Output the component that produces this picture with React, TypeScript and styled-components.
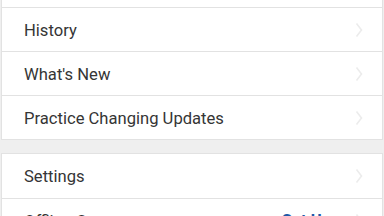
import styled, { createGlobalStyle } from 'styled-components'

const GlobalStyle = createGlobalStyle`
  html, body {
    margin: 0;
    padding: 0;
    background: #efefef;
    font-family: Roboto, "Liberation Sans", sans-serif;
    overflow: hidden;
  }
`

const Page = styled.div`
  width: 384px;
  height: 216px;
  overflow: hidden;
  background: #efefef;
`

const Scroller = styled.div`
  margin-top: -37px;
  display: flex;
  flex-direction: column;
  gap: 13px;
`

const Group = styled.ul`
  list-style: none;
  margin: 0 1px;
  padding: 0;
  background: #fff;
  border: 1px solid #e2e2e2;
`

const Row = styled.li<{ $tall?: boolean }>`
  display: flex;
  align-items: center;
  height: ${p => (p.$tall ? 44 : 43)}px;
  padding: 0 19px 0 22px;
  border-top: 1px solid #e2e2e2;
  &:first-child {
    border-top: none;
  }
`

const Label = styled.span`
  flex: 1;
  font-size: 16.6px;
  color: #353535;
  padding-top: 1px;
`

const Action = styled.span`
  font-size: 16.6px;
  font-weight: 700;
  color: #1f5aa8;
  margin-right: 24px;
`

const Chevron = () => (
  <svg width="8" height="16" viewBox="0 0 8 16">
    <path d="M1.5 1.5 L6.5 8 L1.5 14.5" fill="none" stroke="#ececec" strokeWidth="1.6" />
  </svg>
)

const Item = ({ label, action, tall }: { label: string; action?: string; tall?: boolean }) => (
  <Row $tall={tall}>
    <Label>{label}</Label>
    {action && <Action>{action}</Action>}
    <Chevron />
  </Row>
)

export default function App() {
  return (
    <Page>
      <GlobalStyle />
      <Scroller>
        <Group>
          <Item label="Favorites" />
          <Item label="History" />
          <Item label="What's New" />
          <Item label="Practice Changing Updates" />
        </Group>
        <Group>
          <Item label="Settings" tall />
          <Item label="Offline Content" action="Set Up" />
        </Group>
      </Scroller>
    </Page>
  )
}
